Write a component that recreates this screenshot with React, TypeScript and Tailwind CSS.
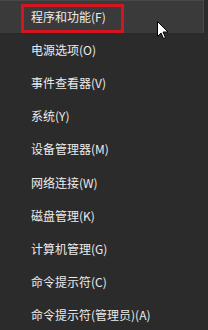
import React from "react";

const items = [
  "程序和功能(F)",
  "电源选项(O)",
  "事件查看器(V)",
  "系统(Y)",
  "设备管理器(M)",
  "网络连接(W)",
  "磁盘管理(K)",
  "计算机管理(G)",
  "命令提示符(C)",
  "命令提示符(管理员)(A)",
];

export default function App() {
  return (
    <div
      className="relative w-[208px] h-[330px] overflow-hidden bg-[#2b2b2b] text-[#ececec] text-[12px]"
      style={{ fontFamily: '"Noto Sans CJK SC", "Noto Sans", sans-serif' }}
    >
      <div className="flex flex-col">
        {items.map((label, i) => (
          <div
            key={label}
            className={
              i === 0
                ? "h-[33.2px] flex items-center pl-[31px] bg-[#3a3a3a] border-t border-r border-[#484848] w-[204px]"
                : "h-[33.2px] flex items-center pl-[31px]"
            }
          >
            {label}
          </div>
        ))}
      </div>

      {/* red highlight frame */}
      <div className="absolute left-[21px] top-[4px] w-[103px] h-[29px] border-[3px] border-[#d4141e]" />

      {/* mouse cursor */}
      <svg
        className="absolute left-[157px] top-[21px]"
        width="12"
        height="19"
        viewBox="0 0 12 19"
      >
        <path
          d="M0.5 0.5 L0.5 15.5 L4 12 L6.5 17.5 L8.5 16.5 L6 11 L11 11 Z"
          fill="#ffffff"
          stroke="#000000"
          strokeWidth="1"
          strokeLinejoin="round"
        />
      </svg>
    </div>
  );
}
